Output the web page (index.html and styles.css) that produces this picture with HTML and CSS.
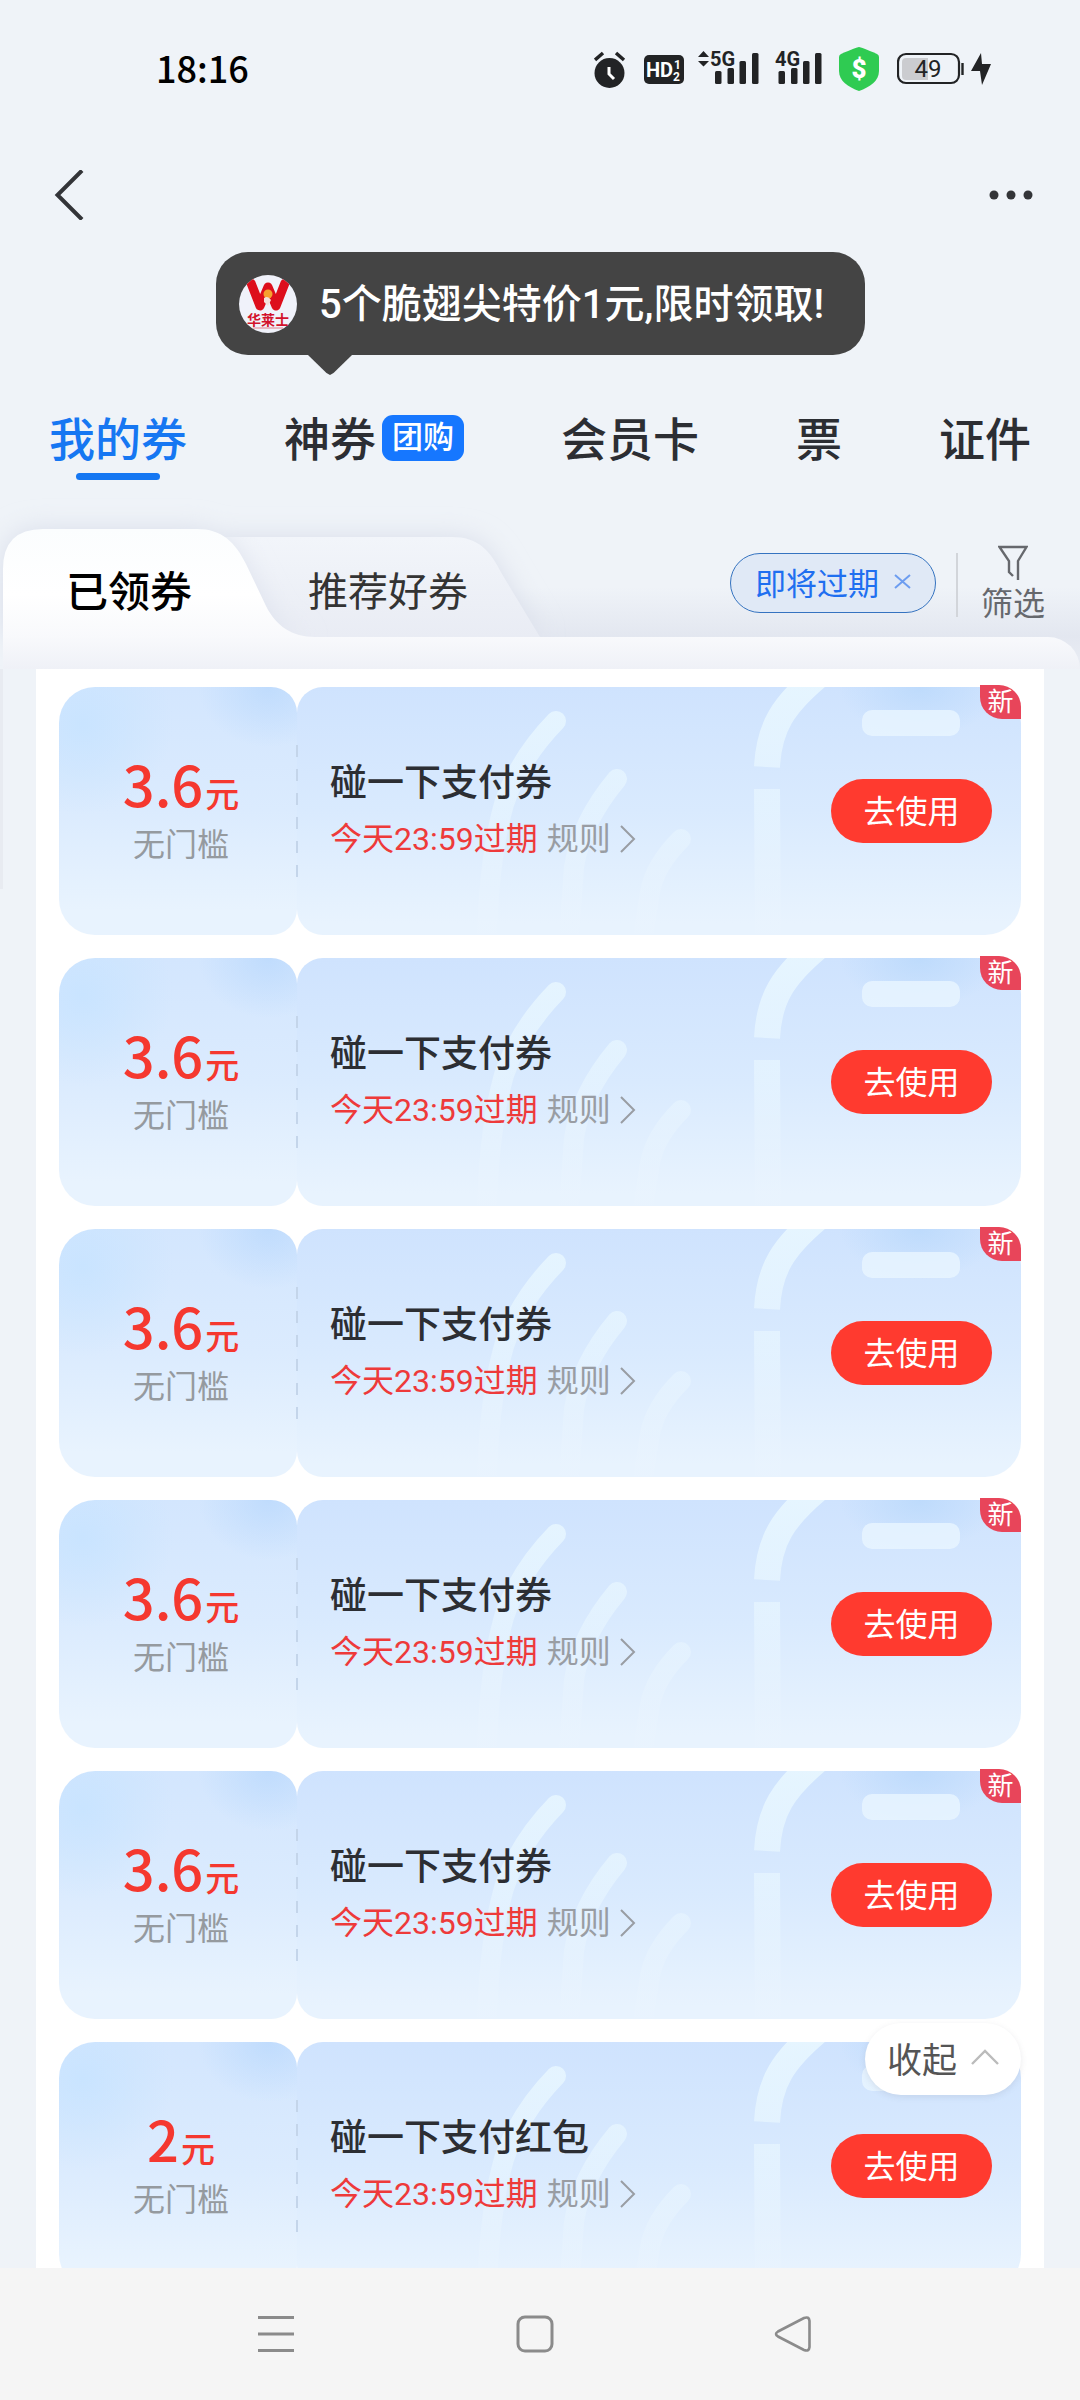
FILE: index.html
```html
<!DOCTYPE html>
<html lang="zh-CN">
<head>
<meta charset="utf-8">
<meta name="viewport" content="width=device-width, initial-scale=1">
<title>我的券</title>
<link rel="stylesheet" href="styles.css">
</head>
<body>
<svg class="defs" aria-hidden="true">
  <defs>
    <linearGradient id="streak" gradientUnits="userSpaceOnUse" x1="0" y1="0" x2="0" y2="247">
      <stop offset="0" stop-color="#e8f7ff" stop-opacity=".9"/>
      <stop offset=".5" stop-color="#e8f6ff" stop-opacity=".65"/>
      <stop offset="1" stop-color="#eef6ff" stop-opacity=".1"/>
    </linearGradient>
    <symbol id="watermark" viewBox="0 0 724 247">
      <g fill="none" stroke="url(#streak)" stroke-width="20">
        <path stroke-linecap="round" d="M259 34Q222 72 207 117Q192 170 190 250"/>
        <path stroke-linecap="round" d="M320 92Q284 135 277 180L272 250"/>
        <path stroke-linecap="round" d="M384 152Q358 178 353 205L346 250"/>
        <path stroke-width="26" d="M522 -12C486 18 472 40 470 80"/>
        <path stroke-width="26" d="M470 102L471 250"/>
      </g>
      <rect x="565" y="23" width="98" height="26" rx="10" fill="#e8f4ff" fill-opacity=".85"/>
    </symbol>
    <symbol id="chevron" viewBox="0 0 18 30">
      <path d="M2 2L15 15L2 28" fill="none" stroke="#999da3" stroke-width="2"/>
    </symbol>
  </defs>
</svg>

<div class="app">
  <div class="status">
    <time class="clock">18:16</time>
    <div class="status-icons">
      <svg width="36" height="44" viewBox="0 0 36 44" role="img" aria-label="闹钟">
        <circle cx="15.500" cy="26" r="15" fill="#222325"/>
        <path d="M1 13L9 6M22 6L30 13" stroke="#222325" stroke-width="3.500" fill="none"/>
        <path d="M15 20V27L20 32" stroke="#fff" stroke-width="3" fill="none"/>
      </svg>
      <svg width="40" height="44" viewBox="0 0 40 44" role="img" aria-label="HD">
        <rect x="0" y="8" width="40" height="29" rx="5" fill="#222325"/>
        <text x="2" y="30" class="si-hd">HD</text>
        <text x="30" y="22" class="si-sm">1</text>
        <text x="29" y="34" class="si-sm">2</text>
      </svg>
      <svg width="63" height="44" viewBox="0 0 63 44" role="img" aria-label="5G">
        <path d="M0 10L5.500 4L11 10ZM0 14H11L5.500 19.500Z" fill="#222325"/>
        <text x="12" y="19" class="si-net">5G</text>
        <g fill="#222325"><rect x="17" y="24" width="6.500" height="13" rx="1.500"/><rect x="29.500" y="21" width="6.500" height="16" rx="1.500"/><rect x="41.500" y="14" width="6.500" height="23" rx="1.500"/><rect x="54" y="6" width="6.500" height="31" rx="1.500"/></g>
      </svg>
      <svg width="50" height="44" viewBox="0 0 50 44" role="img" aria-label="4G">
        <text x="0" y="19" class="si-net">4G</text>
        <g fill="#222325"><rect x="3.500" y="24" width="6.500" height="13" rx="1.500"/><rect x="16" y="21" width="6.500" height="16" rx="1.500"/><rect x="28" y="14" width="6.500" height="23" rx="1.500"/><rect x="40" y="6" width="6.500" height="31" rx="1.500"/></g>
      </svg>
      <svg width="44" height="44" viewBox="0 0 44 44" role="img" aria-label="支付保护">
        <path d="M20 0Q22 0 38 7Q40 8 40 10V24C40 34 31 40 20 44C9 40 0 34 0 24V10Q0 8 2 7Q18 0 20 0Z" fill="#2fcb52"/>
        <text x="20" y="31" class="si-dollar">$</text>
      </svg>
      <svg width="94" height="44" viewBox="0 0 94 44" role="img" aria-label="电量49，充电中">
        <rect x="1" y="7" width="61" height="29" rx="8" fill="none" stroke="#222325" stroke-width="2.200"/>
        <path d="M9 11H31V33H9Q5 33 5 29V15Q5 11 9 11Z" fill="#cbccd0"/>
        <text x="31" y="30" class="si-batt">49</text>
        <path d="M65.500 16V28" stroke="#222325" stroke-width="2.400"/>
        <path d="M84 6L74 24H83L85 38L94 17H85Z" fill="#222325"/>
      </svg>
    </div>
  </div>

  <header class="titlebar">
    <button type="button" class="icon-btn" aria-label="返回">
      <svg width="32" height="50" viewBox="0 0 32 50"><path d="M28 0.500L3.500 25L28 49.500" fill="none" stroke="#333438" stroke-width="4"/></svg>
    </button>
    <button type="button" class="icon-btn" aria-label="更多">
      <svg width="46" height="12" viewBox="0 0 46 12" fill="#333438"><circle cx="6" cy="6" r="4.500"/><circle cx="23" cy="6" r="4.500"/><circle cx="40" cy="6" r="4.500"/></svg>
    </button>
  </header>

  <a class="promo" href="#deal">
    <svg class="promo-logo" width="58" height="58" viewBox="0 0 58 58" aria-hidden="true">
      <clipPath id="round"><circle cx="29" cy="29" r="29"/></clipPath>
      <circle cx="29" cy="29" r="29" fill="#f0f2fa"/>
      <g clip-path="url(#round)">
        <path d="M12 8L21 31L29 12L37 31L46 8" fill="none" stroke="#dd0e1c" stroke-width="9" stroke-linecap="round" stroke-linejoin="round"/>
        <circle cx="29" cy="19" r="4.500" fill="#f6a12e"/>
        <path d="M25 23Q29 20 32 25L29 31L25 27Z" fill="#f3e2dc"/>
        <path d="M14 53H44" stroke="#e2808c" stroke-width="1"/>
      </g>
      <text x="29" y="50" class="logo-text">华莱士</text>
    </svg>
    <span class="promo-text">5个脆翅尖特价1元,限时领取!</span>
  </a>

  <nav class="tabs" aria-label="卡包分类">
    <a class="tab active" href="#mine" aria-current="page">我的券</a>
    <a class="tab" href="#deal">神券<span class="tab-badge">团购</span></a>
    <a class="tab" href="#member">会员卡</a>
    <a class="tab" href="#ticket">票</a>
    <a class="tab" href="#id">证件</a>
  </nav>

  <section class="folder">
    <svg class="folder-shape" width="560" height="167" viewBox="0 0 560 167" aria-hidden="true">
      <defs>
        <linearGradient id="front" x1="0" y1="0" x2="0" y2="1"><stop offset="0" stop-color="#fbfdfe"/><stop offset=".6" stop-color="#fff"/><stop offset="1" stop-color="#f8f9fc"/></linearGradient>
        <linearGradient id="back" x1="0" y1="0" x2="0" y2="1"><stop offset="0" stop-color="#f2f5fa"/><stop offset="1" stop-color="#e9ecf4"/></linearGradient>
        <filter id="soft" filterUnits="userSpaceOnUse" x="-40" y="-40" width="640" height="230"><feGaussianBlur stdDeviation="13"/></filter>
        <filter id="softer" filterUnits="userSpaceOnUse" x="150" y="0" width="300" height="170"><feGaussianBlur stdDeviation="12"/></filter>
        <clipPath id="backclip"><path d="M200 35H452C478 35 490 48 502 72L540 135H200Z"/></clipPath>
      </defs>
      <path d="M3 135V67Q3 27 43 27H200L215 35H452C478 35 490 48 502 72L540 135Z" fill="#d9deea" filter="url(#soft)"/>
      <path d="M200 35H452C478 35 490 48 502 72L540 135H200Z" fill="url(#back)"/>
      <g clip-path="url(#backclip)"><path d="M150 27H197C222 27 235 40 246 62L268 104C277 124 294 135 315 135H150Z" fill="#dfe3ee" filter="url(#softer)"/></g>
      <path d="M3 136V67Q3 27 43 27H197C222 27 235 40 246 62L266 104C276 124 292 135 315 135V136Z" fill="url(#front)"/>
    </svg>
    <div class="folder-row">
      <div class="folder-tabs" role="tablist">
        <button type="button" role="tab" aria-selected="true" class="ftab on">已领券</button>
        <button type="button" role="tab" aria-selected="false" class="ftab">推荐好券</button>
      </div>
      <div class="filters">
        <button type="button" class="chip">即将过期
          <svg width="17" height="15" viewBox="0 0 17 15" aria-hidden="true"><path d="M1 1L16 14M16 1L1 14" stroke="#6d9df0" stroke-width="2"/></svg>
        </button>
        <button type="button" class="filter">
          <svg width="30" height="36" viewBox="0 0 30 36" aria-hidden="true"><path d="M20 35V16L28.500 2H1.500L11 16V27L15 31" fill="none" stroke="#66686d" stroke-width="2.400"/></svg>
          筛选
        </button>
      </div>
    </div>
    <div class="folder-lip"></div>
  </section>

  <main class="stage">
    <div class="panel">
      <article class="coupon">
        <div class="amount"><p class="price">3.6<small>元</small></p><p class="limit">无门槛</p></div>
        <div class="detail">
          <svg class="mark" aria-hidden="true"><use href="#watermark"/></svg>
          <div class="info"><h2>碰一下支付券</h2><p><span class="due">今天23:59过期</span><a class="rule" href="#rule">规则<svg width="18" height="30" aria-hidden="true"><use href="#chevron"/></svg></a></p></div>
          <button type="button" class="use">去使用</button>
        </div>
        <span class="new">新</span>
      </article>
      <article class="coupon">
        <div class="amount"><p class="price">3.6<small>元</small></p><p class="limit">无门槛</p></div>
        <div class="detail">
          <svg class="mark" aria-hidden="true"><use href="#watermark"/></svg>
          <div class="info"><h2>碰一下支付券</h2><p><span class="due">今天23:59过期</span><a class="rule" href="#rule">规则<svg width="18" height="30" aria-hidden="true"><use href="#chevron"/></svg></a></p></div>
          <button type="button" class="use">去使用</button>
        </div>
        <span class="new">新</span>
      </article>
      <article class="coupon">
        <div class="amount"><p class="price">3.6<small>元</small></p><p class="limit">无门槛</p></div>
        <div class="detail">
          <svg class="mark" aria-hidden="true"><use href="#watermark"/></svg>
          <div class="info"><h2>碰一下支付券</h2><p><span class="due">今天23:59过期</span><a class="rule" href="#rule">规则<svg width="18" height="30" aria-hidden="true"><use href="#chevron"/></svg></a></p></div>
          <button type="button" class="use">去使用</button>
        </div>
        <span class="new">新</span>
      </article>
      <article class="coupon">
        <div class="amount"><p class="price">3.6<small>元</small></p><p class="limit">无门槛</p></div>
        <div class="detail">
          <svg class="mark" aria-hidden="true"><use href="#watermark"/></svg>
          <div class="info"><h2>碰一下支付券</h2><p><span class="due">今天23:59过期</span><a class="rule" href="#rule">规则<svg width="18" height="30" aria-hidden="true"><use href="#chevron"/></svg></a></p></div>
          <button type="button" class="use">去使用</button>
        </div>
        <span class="new">新</span>
      </article>
      <article class="coupon">
        <div class="amount"><p class="price">3.6<small>元</small></p><p class="limit">无门槛</p></div>
        <div class="detail">
          <svg class="mark" aria-hidden="true"><use href="#watermark"/></svg>
          <div class="info"><h2>碰一下支付券</h2><p><span class="due">今天23:59过期</span><a class="rule" href="#rule">规则<svg width="18" height="30" aria-hidden="true"><use href="#chevron"/></svg></a></p></div>
          <button type="button" class="use">去使用</button>
        </div>
        <span class="new">新</span>
      </article>
      <article class="coupon">
        <div class="amount"><p class="price">2<small>元</small></p><p class="limit">无门槛</p></div>
        <div class="detail">
          <svg class="mark" aria-hidden="true"><use href="#watermark"/></svg>
          <div class="info"><h2>碰一下支付红包</h2><p><span class="due">今天23:59过期</span><a class="rule" href="#rule">规则<svg width="18" height="30" aria-hidden="true"><use href="#chevron"/></svg></a></p></div>
          <button type="button" class="use">去使用</button>
        </div>
      </article>
    </div>
    <button type="button" class="collapse">收起
      <svg width="28" height="16" viewBox="0 0 28 16" aria-hidden="true"><path d="M1 15L14 2L27 15" fill="none" stroke="#bbb" stroke-width="2.400"/></svg>
    </button>
  </main>

  <footer class="sysnav">
    <button type="button" class="icon-btn" aria-label="最近任务"><svg width="38" height="38" viewBox="0 0 38 38"><path d="M1 2.500H37M1 19H37M1 35.500H37" stroke="#8b8b8b" stroke-width="3"/></svg></button>
    <button type="button" class="icon-btn" aria-label="主屏幕"><svg width="38" height="38" viewBox="0 0 38 38"><rect x="2" y="2" width="34" height="34" rx="7" fill="none" stroke="#8b8b8b" stroke-width="3"/></svg></button>
    <button type="button" class="icon-btn" aria-label="返回"><svg width="38" height="38" viewBox="0 0 38 38"><path d="M30 3Q35 1 35.500 6V32Q35 37 30 35L4 21.500Q0 19 4 16.500Z" fill="none" stroke="#8b8b8b" stroke-width="2.600"/></svg></button>
  </footer>
</div>
</body>
</html>
```
FILE: styles.css
```css
* { box-sizing: border-box; }

body {
  margin: 0;
  background: #eff3f8;
  color: #2c2e33;
  font-family: Roboto, "Noto Sans CJK SC", sans-serif;
}

h2, p { margin: 0; }

a { color: inherit; text-decoration: none; }

svg { display: block; flex: none; }

button {
  margin: 0;
  padding: 0;
  border: 0;
  background: none;
  color: inherit;
  font: inherit;
  cursor: pointer;
}

.defs { position: absolute; width: 0; height: 0; }

.app {
  display: flex;
  flex-direction: column;
  height: 100vh;
}

.app > * { flex: none; }

/* status bar */
.status {
  display: flex;
  justify-content: space-between;
  align-items: center;
  height: 138px;
  padding: 0 89px 0 156px;
}

.clock { color: #000; font: 500 36px/46px "Noto Sans CJK SC", sans-serif; padding-bottom: 4px; }

.status-icons { display: flex; gap: 14px; align-items: center; }

.status-icons text { font-family: Roboto, sans-serif; fill: #222325; font-weight: 700; }
.status-icons .si-hd { font-size: 20px; fill: #fff; }
.status-icons .si-sm { font-size: 12px; fill: #fff; }
.status-icons .si-net { font-size: 20px; }
.status-icons .si-dollar { font-size: 26px; font-weight: 900; fill: #fff; text-anchor: middle; }
.status-icons .si-batt { font-size: 24px; font-weight: 400; text-anchor: middle; }

/* title bar */
.titlebar {
  display: flex;
  justify-content: space-between;
  align-items: center;
  height: 114px;
  padding: 0 46px 0 54px;
}

/* promo bubble */
.promo {
  position: relative;
  display: flex;
  align-items: center;
  gap: 22px;
  align-self: flex-start;
  height: 103px;
  margin: 0 0 19px 20%;
  padding: 0 41px 0 23px;
  border-radius: 32px;
  background: #444;
  color: #fff;
  font-size: 40px;
  font-weight: 500;
  white-space: nowrap;
}

.promo-text { padding-bottom: 6px; }

.promo::after {
  content: "";
  position: absolute;
  left: 92px;
  top: 100%;
  width: 44px;
  height: 20px;
  background: #444;
  clip-path: polygon(0 0, 100% 0, 58% 90%, 50% 100%, 42% 90%);
}

.logo-text {
  font: 700 14px "Noto Sans CJK SC", sans-serif;
  fill: #d3122c;
  text-anchor: middle;
}

/* category tabs */
.tabs {
  display: flex;
  justify-content: space-between;
  height: 128px;
  padding: 0 49px;
}

.tab {
  position: relative;
  display: flex;
  align-items: center;
  gap: 6px;
  padding-bottom: 5px;
  font-size: 46px;
  font-weight: 500;
}

.tab.active { color: #1677f2; }

.tab.active::after {
  content: "";
  position: absolute;
  left: 50%;
  bottom: 22px;
  width: 84px;
  height: 7px;
  margin-left: -42px;
  border-radius: 4px;
  background: #1677f2;
}

.tab-badge {
  margin-top: 4px;
  padding: 0 10px;
  border-radius: 11px;
  background: #1677ff;
  color: #fff;
  font-size: 31px;
  line-height: 46px;
}

/* folder header */
.folder { position: relative; }

.folder-shape { position: absolute; left: 0; top: 0; overflow: visible; }

.folder-row {
  position: relative;
  display: flex;
  justify-content: space-between;
  height: 135px;
  padding: 0 35px 0 66px;
}

.folder-tabs { display: flex; gap: 116px; padding-top: 46px; }

.ftab { font-size: 40px; line-height: 88px; color: #333; }
.ftab.on { font-size: 42px; font-weight: 500; color: #000; }

.filters { display: flex; align-items: flex-start; }

.chip {
  display: flex;
  align-items: center;
  gap: 15px;
  height: 60px;
  margin: 51px 20px 0 0;
  padding: 0 24px 3px 24px;
  border: 1px solid #3573c0;
  border-radius: 30px;
  background: #e0e9f6;
  color: #1f6ff0;
  font-size: 31px;
}

.filter {
  display: flex;
  flex-direction: column;
  align-items: center;
  gap: 2px;
  margin-top: 43px;
  padding-left: 25px;
  color: #66686d;
  font-size: 32px;
  line-height: 42px;
  background: linear-gradient(#d2d5da, #d2d5da) 0 8px / 2px 64px no-repeat;
}

.folder-lip {
  position: relative;
  height: 32px;
  margin-left: 3px;
  border-radius: 0 36px 0 0;
  background: linear-gradient(#f8f9fc, #eff1f7);
}

/* shade cast behind the folder body */
.folder-lip::before {
  content: "";
  position: absolute;
  z-index: -1;
  right: 0;
  bottom: 0;
  left: 0;
  height: 82px;
  background: linear-gradient(to top, #eaedf4, #e3e7f0 40%, #eff3f800);
}

/* coupon list */
.app > .stage {
  position: relative;
  flex: 1 1 0;
  min-height: 0;
  overflow: hidden;
  padding: 0 36px;
  background: linear-gradient(#e8ebf1, #e8ebf1) 0 0 / 3px 220px no-repeat;
}

.panel {
  display: flex;
  flex-direction: column;
  gap: 23px;
  padding: 18px 23px;
  background: #fff;
}

.coupon { position: relative; display: flex; height: 248px; }

.amount {
  flex: 0 0 238px;
  padding: 66px 0 0 6px;
  border-radius: 36px 26px 26px 36px;
  background:
    radial-gradient(ellipse 70px 60px at 88% 0, #c0dcfd, #c0dcfd00),
    radial-gradient(ellipse 90px 90px at 10% 15%, #c9e4ff, #c9e4ff00),
    linear-gradient(#d3e6fe, #dbebfe 50%, #e8f3fe 90%);
  text-align: center;
}

.price {
  color: #f5382f;
  font-family: "Noto Sans CJK SC", sans-serif;
  font-size: 56px;
  font-weight: 500;
  line-height: 60px;
}

.price small { margin-left: 2px; font-size: 34px; line-height: 34px; }

.limit { margin-top: 8px; color: #959a9f; font-size: 32px; line-height: 48px; }

.detail {
  position: relative;
  flex: 1;
  display: flex;
  justify-content: space-between;
  align-items: center;
  padding: 0 29px 0 33px;
  border-radius: 26px 36px 36px 26px;
  background:
    radial-gradient(ellipse 80px 50px at 86% 0, #bedbfc, #bedbfc00),
    linear-gradient(#cfe3fe, #d9eafe 50%, #e8f3fe 95%);
  overflow: hidden;
}

/* perforation between the two halves */
.coupon::after {
  content: "";
  position: absolute;
  left: 237px;
  top: 58px;
  width: 2px;
  height: 134px;
  background: repeating-linear-gradient(#c4d5ea 0 12px, #c4d5ea00 12px 24px);
}

.mark { position: absolute; right: 0; top: 0; width: 724px; height: 247px; }

.info { position: relative; }

.info h2 { font-size: 37px; font-weight: 500; line-height: 56px; }

.info p { display: flex; align-items: center; font-size: 32px; line-height: 54px; }

.due { color: #ee3a3a; }

.rule {
  display: flex;
  align-items: center;
  gap: 8px;
  margin-left: 9px;
  color: #999da3;
}

.use {
  position: relative;
  width: 161px;
  height: 64px;
  padding-bottom: 4px;
  border-radius: 32px;
  background: #ff3a2f;
  color: #fff;
  font-size: 32px;
}

.new {
  position: absolute;
  right: 0;
  top: -2px;
  width: 41px;
  border-radius: 0 22px 0 22px;
  background: #e8455a;
  color: #fff;
  font-size: 26px;
  line-height: 34px;
  text-align: center;
}

.collapse {
  position: absolute;
  right: 59px;
  bottom: 173px;
  display: flex;
  align-items: center;
  gap: 14px;
  height: 72px;
  padding: 0 22px 4px 22px;
  border-radius: 36px;
  background: #fff;
  box-shadow: 0 2px 6px #64646e22;
  color: #555;
  font-size: 35px;
}

/* system navigation */
.sysnav {
  display: flex;
  justify-content: space-between;
  align-items: center;
  height: 132px;
  padding: 0 268px 0 257px;
  background: #f5f5f5;
}
```
